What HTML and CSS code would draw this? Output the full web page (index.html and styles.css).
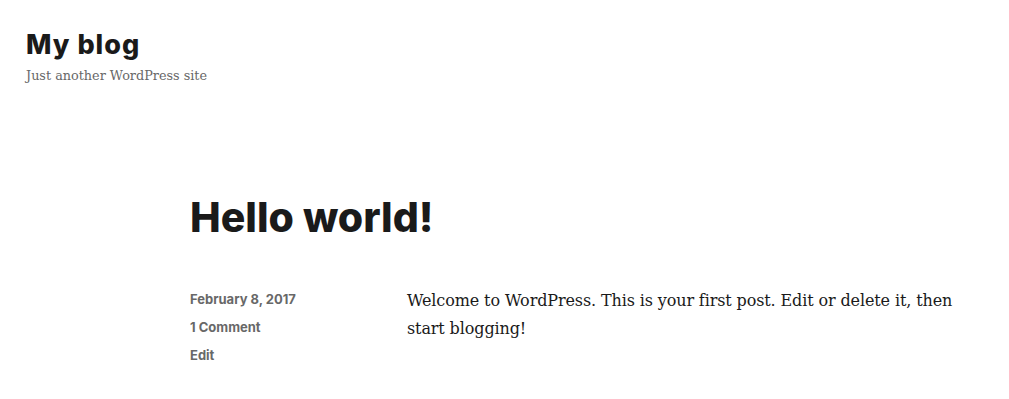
FILE: index.html
```html
<!DOCTYPE html>
<html lang="en">
<head>
    <meta charset="UTF-8">
    <meta name="viewport" content="width=device-width, initial-scale=1.0">
    <title>My blog</title>
    <link rel="stylesheet" href="styles.css">
</head>
<body>
    <header class="site-header">
        <p class="site-title"><a href="#">My blog</a></p>
        <p class="site-description">Just another WordPress site</p>
    </header>
    <main class="site-main">
        <article class="post">
            <h1 class="entry-title"><a href="#">Hello world!</a></h1>
            <div class="entry-body">
                <footer class="entry-footer">
                    <span class="posted-on"><a href="#">February 8, 2017</a></span>
                    <span class="comments-link"><a href="#">1 Comment</a></span>
                    <span class="edit-link"><a href="#">Edit</a></span>
                </footer>
                <div class="entry-content">
                    <p>Welcome to WordPress. This is your first post. Edit or delete it, then start blogging!</p>
                </div>
            </div>
        </article>
    </main>
</body>
</html>
```
FILE: styles.css
```css
body {
    margin: 0;
    background: #ffffff;
    color: #1a1a1a;
    font-family: "DejaVu Serif", Georgia, serif;
}
a {
    color: inherit;
    text-decoration: none;
}
.site-header {
    padding: 27px 26px 0;
}
.site-title {
    margin: 0;
    font-family: Inter, "DejaVu Sans", sans-serif;
    font-weight: 800;
    font-size: 27px;
    letter-spacing: 1px;
    line-height: 36px;
}
.site-description {
    margin: 3px 0 0;
    font-size: 12.8px;
    line-height: 20px;
    color: #686868;
}
.site-main {
    padding: 103px 0 0 190px;
}
.entry-title {
    margin: 0 0 42px;
    font-family: Inter, "DejaVu Sans", sans-serif;
    font-weight: 800;
    font-size: 41px;
    letter-spacing: 0;
    line-height: 56px;
}
.entry-body {
    display: grid;
    grid-template-columns: 217px 560px;
}
.entry-footer {
    display: flex;
    flex-direction: column;
    gap: 7px;
    padding-top: 2px;
    font-family: Inter, "DejaVu Sans", sans-serif;
    font-weight: 700;
    font-size: 13px;
    line-height: 21px;
    color: #686868;
}
.entry-content p {
    margin: 0;
    font-size: 16px;
    letter-spacing: -0.12px;
    line-height: 28px;
}
```
